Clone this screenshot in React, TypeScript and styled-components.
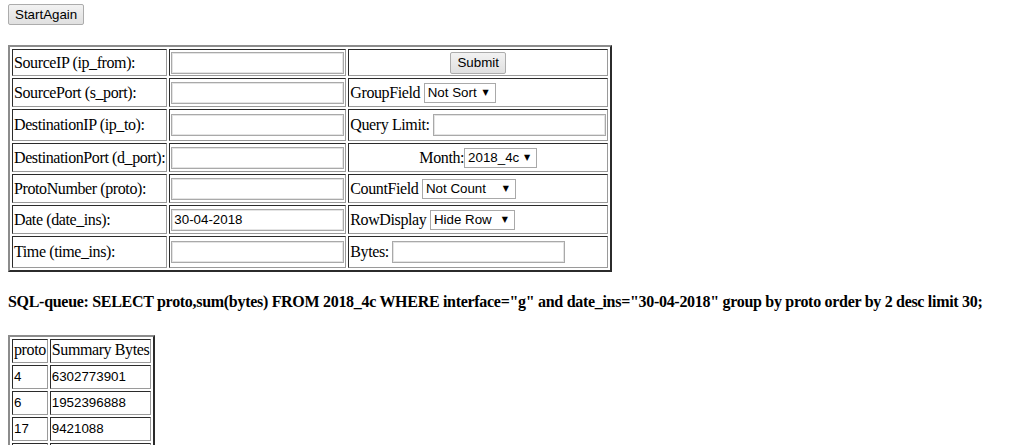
import styled, { createGlobalStyle } from "styled-components";

const GlobalStyle = createGlobalStyle`
  body {
    margin: 4px 8px 8px;
    background: #fff;
    color: #000;
    font-family: "Liberation Serif", "Times New Roman", serif;
    font-size: 16px;
  }
`;

const Page = styled.div`
  display: flex;
  flex-direction: column;
  align-items: flex-start;
`;

const Button = styled.button<{ $h?: number }>`
  font-family: "Liberation Sans", Arial, sans-serif;
  font-size: 13.33px;
  letter-spacing: 0;
  color: #000;
  height: ${(p) => p.$h ?? 21}px;
  padding: 0 6px;
  border: 1px solid #acacac;
  border-radius: 2px;
  background: linear-gradient(#f2f2f2, #e0e0e0);
`;

const FormTable = styled.table`
  margin-top: 20px;
  border-collapse: separate;
  border-spacing: 2px;
  border-style: solid;
  border-width: 2px;
  border-color: #8c8c8c #2b2b2b #2b2b2b #8c8c8c;
  letter-spacing: -0.4px;
`;

const ResultTable = styled(FormTable)`
  margin-top: 24px;
`;

const Row = styled.tr<{ $h?: number }>`
  height: ${(p) => (p.$h ? `${p.$h}px` : "auto")};
`;

const Cell = styled.td<{ $center?: boolean }>`
  border-style: solid;
  border-width: 1px;
  border-color: #2b2b2b #9a9a9a #9a9a9a #2b2b2b;
  padding: 1px;
  text-align: ${(p) => (p.$center ? "center" : "left")};
  white-space: nowrap;
  vertical-align: middle;
`;

const TextInput = styled.input`
  box-sizing: border-box;
  width: 173px;
  height: 22px;
  margin: 0;
  padding: 1px 2px;
  font-family: "Liberation Sans", Arial, sans-serif;
  font-size: 13.33px;
  letter-spacing: 0;
  border: 1px solid #a9a9a9;
  box-shadow: inset 1px 1px 0 #e4e4e4, inset -1px -1px 0 #e4e4e4;
`;

const SelectWrap = styled.span`
  position: relative;
  display: inline-block;

  &::after {
    content: "▼";
    position: absolute;
    right: 7px;
    top: 5px;
    font-family: "DejaVu Sans", sans-serif;
    font-size: 8px;
    letter-spacing: 0;
    pointer-events: none;
  }
`;

const Select = styled.select<{ $w: number }>`
  appearance: none;
  box-sizing: border-box;
  width: ${(p) => p.$w}px;
  height: 20px;
  margin: 0;
  padding: 0 0 0 3px;
  font-family: "Liberation Sans", Arial, sans-serif;
  font-size: 13.33px;
  letter-spacing: 0;
  color: #000;
  background: #fff;
  border: 1px solid #a9a9a9;
  border-radius: 0;
`;

const Query = styled.h4`
  margin: 21px 0 0;
  font-size: 16px;
  font-weight: bold;
  letter-spacing: -0.3px;
  white-space: nowrap;
`;

const DataCell = styled(Cell)`
  padding: 1px 1px 3px;
`;

const NumText = styled.span`
  font-family: "Liberation Sans", Arial, sans-serif;
  font-size: 13.33px;
  letter-spacing: 0;
`;

const fields: [string, string, number][] = [
  ["SourceIP (ip_from):", "", 27],
  ["SourcePort (s_port):", "", 29],
  ["DestinationIP (ip_to):", "", 32],
  ["DestinationPort (d_port):", "", 29],
  ["ProtoNumber (proto):", "", 29],
  ["Date (date_ins):", "30-04-2018", 29],
  ["Time (time_ins):", "", 32],
];

const Dropdown = ({ w, value }: { w: number; value: string }) => (
  <SelectWrap>
    <Select $w={w} defaultValue={value}>
      <option>{value}</option>
    </Select>
  </SelectWrap>
);

const side = [
  <Cell $center key="s">
    <Button $h={22}>Submit</Button>
  </Cell>,
  <Cell key="g">
    GroupField <Dropdown w={72} value="Not Sort" />
  </Cell>,
  <Cell key="q">
    Query Limit: <TextInput />
  </Cell>,
  <Cell $center key="m">
    Month:<Dropdown w={73} value="2018_4c" />
  </Cell>,
  <Cell key="c">
    CountField <Dropdown w={94} value="Not Count" />
  </Cell>,
  <Cell key="r">
    RowDisplay <Dropdown w={85} value="Hide Row" />
  </Cell>,
  <Cell key="b">
    Bytes: <TextInput />
  </Cell>,
];

const results: [string, string][] = [
  ["4", "6302773901"],
  ["6", "1952396888"],
  ["17", "9421088"],
  ["1", "1211604"],
];

export default function App() {
  return (
    <Page>
      <GlobalStyle />
      <Button>StartAgain</Button>
      <FormTable>
        <tbody>
          {fields.map(([label, value, h], i) => (
            <Row key={label} $h={h}>
              <Cell>{label}</Cell>
              <Cell>
                <TextInput defaultValue={value} />
              </Cell>
              {side[i]}
            </Row>
          ))}
        </tbody>
      </FormTable>
      <Query>
        SQL-queue: SELECT proto,sum(bytes) FROM 2018_4c WHERE interface="g" and
        date_ins="30-04-2018" group by proto order by 2 desc limit 30;
      </Query>
      <ResultTable>
        <tbody>
          <Row>
            <DataCell>proto</DataCell>
            <DataCell>Summary Bytes</DataCell>
          </Row>
          {results.map(([p, b]) => (
            <Row key={p}>
              <DataCell>
                <NumText>{p}</NumText>
              </DataCell>
              <DataCell>
                <NumText>{b}</NumText>
              </DataCell>
            </Row>
          ))}
        </tbody>
      </ResultTable>
    </Page>
  );
}
